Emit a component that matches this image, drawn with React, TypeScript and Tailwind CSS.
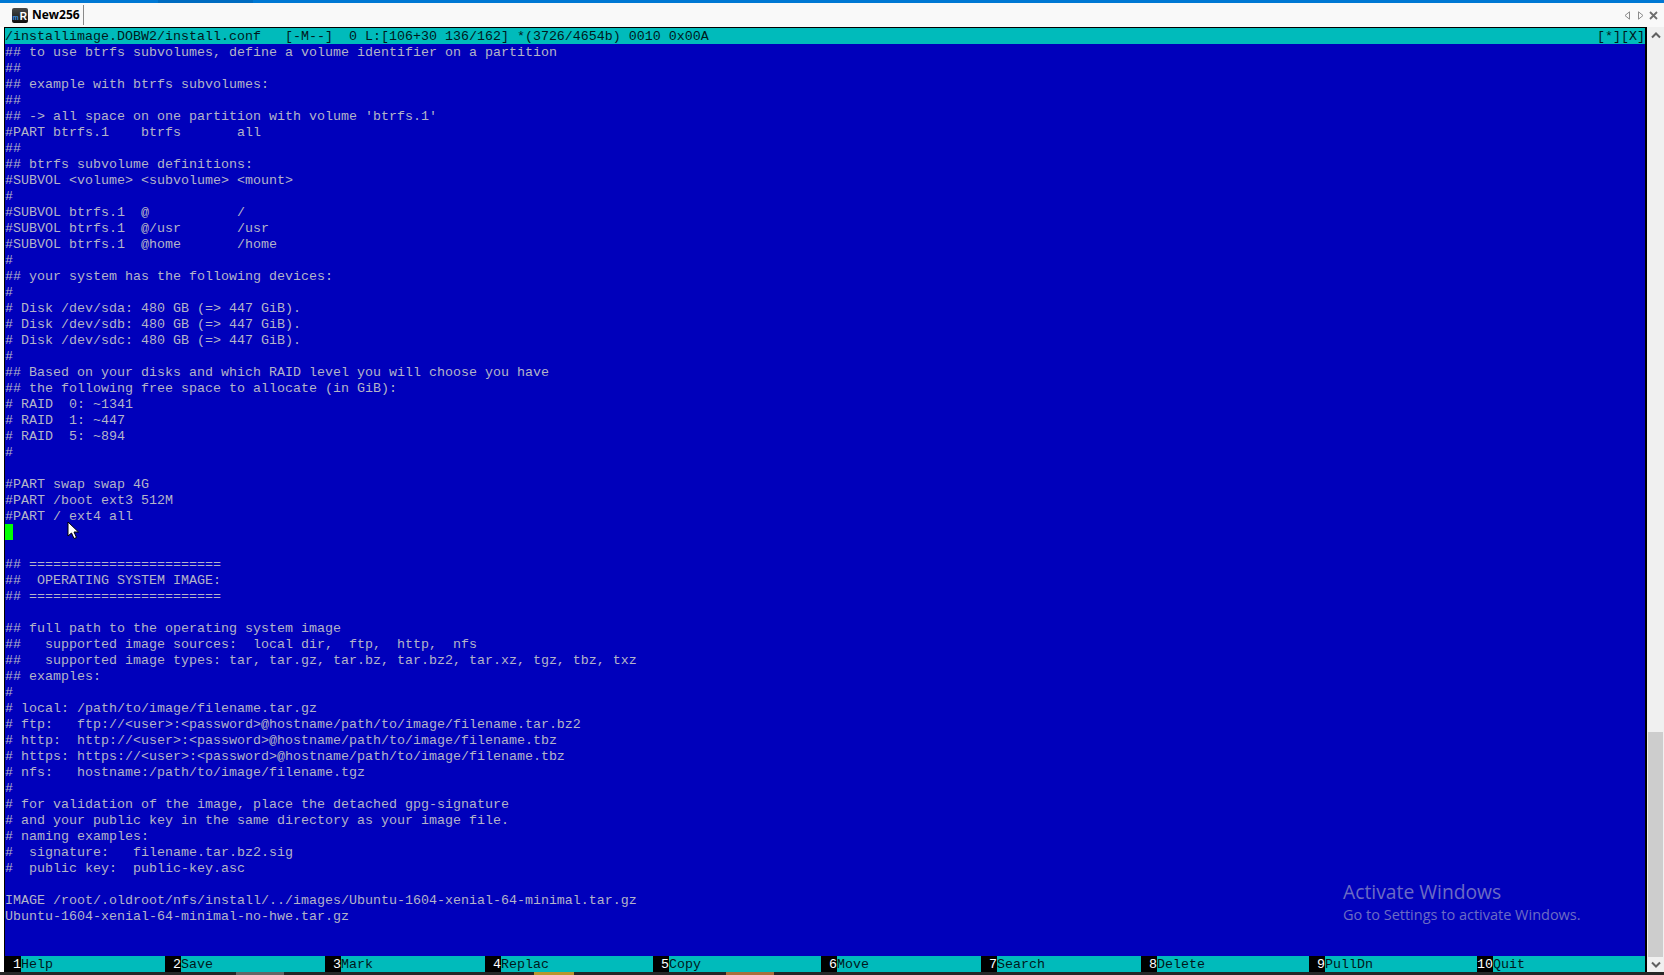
import { Fragment } from "react";

const lines = [
  "## to use btrfs subvolumes, define a volume identifier on a partition",
  "##",
  "## example with btrfs subvolumes:",
  "##",
  "## -> all space on one partition with volume 'btrfs.1'",
  "#PART btrfs.1    btrfs       all",
  "##",
  "## btrfs subvolume definitions:",
  "#SUBVOL <volume> <subvolume> <mount>",
  "#",
  "#SUBVOL btrfs.1  @           /",
  "#SUBVOL btrfs.1  @/usr       /usr",
  "#SUBVOL btrfs.1  @home       /home",
  "#",
  "## your system has the following devices:",
  "#",
  "# Disk /dev/sda: 480 GB (=> 447 GiB).",
  "# Disk /dev/sdb: 480 GB (=> 447 GiB).",
  "# Disk /dev/sdc: 480 GB (=> 447 GiB).",
  "#",
  "## Based on your disks and which RAID level you will choose you have",
  "## the following free space to allocate (in GiB):",
  "# RAID  0: ~1341",
  "# RAID  1: ~447",
  "# RAID  5: ~894",
  "#",
  "",
  "#PART swap swap 4G",
  "#PART /boot ext3 512M",
  "#PART / ext4 all",
  "CURSOR",
  "",
  "## ========================",
  "##  OPERATING SYSTEM IMAGE:",
  "## ========================",
  "",
  "## full path to the operating system image",
  "##   supported image sources:  local dir,  ftp,  http,  nfs",
  "##   supported image types: tar, tar.gz, tar.bz, tar.bz2, tar.xz, tgz, tbz, txz",
  "## examples:",
  "#",
  "# local: /path/to/image/filename.tar.gz",
  "# ftp:   ftp://<user>:<password>@hostname/path/to/image/filename.tar.bz2",
  "# http:  http://<user>:<password>@hostname/path/to/image/filename.tbz",
  "# https: https://<user>:<password>@hostname/path/to/image/filename.tbz",
  "# nfs:   hostname:/path/to/image/filename.tgz",
  "#",
  "# for validation of the image, place the detached gpg-signature",
  "# and your public key in the same directory as your image file.",
  "# naming examples:",
  "#  signature:   filename.tar.bz2.sig",
  "#  public key:  public-key.asc",
  "",
  "IMAGE /root/.oldroot/nfs/install/../images/Ubuntu-1604-xenial-64-minimal.tar.gz",
  "Ubuntu-1604-xenial-64-minimal-no-hwe.tar.gz",
  "",
  "",
];

const fnKeys = [
  { n: "1", label: "Help", width: "w-[144px]" },
  { n: "2", label: "Save", width: "w-[144px]" },
  { n: "3", label: "Mark", width: "w-[144px]" },
  { n: "4", label: "Replac", width: "w-[152px]" },
  { n: "5", label: "Copy", width: "w-[152px]" },
  { n: "6", label: "Move", width: "w-[144px]" },
  { n: "7", label: "Search", width: "w-[144px]" },
  { n: "8", label: "Delete", width: "w-[152px]" },
  { n: "9", label: "PullDn", width: "w-[152px]" },
  { n: "10", label: "Quit", width: "w-[152px]" },
];

function TabBar() {
  return (
    <div className="flex h-6 items-center bg-[#f9f9f9] pl-3">
      {/* app logo */}
      <div className="flex h-[15px] w-4 items-end justify-end overflow-hidden rounded-[2px] bg-gradient-to-b from-[#4a4a4a] to-[#111111] pr-[1px] font-['Liberation_Sans',sans-serif] text-[10px] font-bold leading-[13px] text-white">
        <span className="mr-[1px] text-[7px] leading-[10px] text-[#3b8fe0]">m</span>
        R
      </div>
      <span className="ml-1 font-['Open_Sans',sans-serif] text-xs font-bold leading-6 text-black">
        New256
      </span>
      <div className="ml-[3px] h-5 w-px bg-[#8a8a8a]" />
      <div className="flex-1" />
      <div className="mr-[6px] flex items-center gap-[5px]">
        <svg width="7" height="9" viewBox="0 0 7 9" className="text-[#8c8c8c]">
          <path d="M5.5 0.8 L1 4.5 L5.5 8.2 Z" fill="none" stroke="currentColor" />
        </svg>
        <svg width="7" height="9" viewBox="0 0 7 9" className="ml-px text-[#8c8c8c]">
          <path d="M1.5 0.8 L6 4.5 L1.5 8.2 Z" fill="none" stroke="currentColor" />
        </svg>
        <svg width="9" height="9" viewBox="0 0 9 9" className="text-[#6e6e6e]">
          <path d="M1 1 L8 8 M8 1 L1 8" fill="none" stroke="currentColor" strokeWidth="1.8" />
        </svg>
      </div>
    </div>
  );
}

function Editor() {
  return (
    <div className="h-[945px] w-[1643px] border-t border-r-2 border-l border-black bg-[#0000bb] font-['Liberation_Mono',monospace] text-[13.33px] leading-[18px] whitespace-pre text-[#b4b4c8]">
      <div className="flex h-4 justify-between bg-[#00bbbb] text-[#00181c]">
        <span>/installimage.DOBW2/install.conf   [-M--]  0 L:[106+30 136/162] *(3726/4654b) 0010 0x00A</span>
        <span>[*][X]</span>
      </div>
      {lines.map((line, i) =>
        line === "CURSOR" ? (
          <div key={i} className="h-4">
            <div className="h-4 w-2 bg-[#00ff00]" />
          </div>
        ) : (
          <div key={i} className="h-4">
            {line}
          </div>
        ),
      )}
      <div className="flex h-4 bg-black">
        {fnKeys.map((key) => (
          <Fragment key={key.n}>
            <div className="h-4 w-4 text-right text-white">{key.n}</div>
            <div className={`h-4 ${key.width} bg-[#00bbbb] text-[#00181c]`}>{key.label}</div>
          </Fragment>
        ))}
      </div>
    </div>
  );
}

function Scrollbar() {
  return (
    <div className="flex h-[945px] w-[17px] flex-col items-center bg-[#f0f0f0]">
      <div className="flex h-[705px] w-full items-start justify-center pt-[5px]">
        <svg width="10" height="7" viewBox="0 0 10 7" className="text-[#606060]">
          <path d="M1 5.5 L5 1.5 L9 5.5" fill="none" stroke="currentColor" strokeWidth="2" />
        </svg>
      </div>
      <div className="h-[225px] w-[15px] bg-[#cdcdcd]" />
      <div className="flex flex-1 items-center justify-center">
        <svg width="10" height="7" viewBox="0 0 10 7" className="text-[#606060]">
          <path d="M1 1.5 L5 5.5 L9 1.5" fill="none" stroke="currentColor" strokeWidth="2" />
        </svg>
      </div>
    </div>
  );
}

export default function App() {
  return (
    <div className="relative flex h-[975px] w-[1664px] flex-col overflow-hidden bg-white">
      <div className="flex h-[3px] bg-[#0078d4]">
        <div className="ml-[158px] h-[3px] w-[95px] bg-[#006cc1]" />
      </div>
      <TabBar />
      <div className="flex pl-1">
        <Editor />
        <Scrollbar />
      </div>
      {/* taskbar edge at the bottom of the capture */}
      <div className="flex h-[3px] bg-[#262626]">
        <div className="ml-[236px] w-12 bg-[#666666]" />
        <div className="ml-[250px] w-10 bg-[#b8962e]" />
        <div className="ml-[152px] w-12 bg-[#a8703c]" />
      </div>

      {/* mouse pointer */}
      <svg width="13" height="19" viewBox="0 0 13 19" className="absolute top-[521px] left-[67px]">
        <path
          d="M1 1 L1 15 L4.5 12 L7 17.5 L9.5 16.5 L7 11 L11.5 11 Z"
          fill="#ffffff"
          stroke="#000000"
          strokeWidth="1"
        />
      </svg>

      {/* windows activation watermark */}
      <div className="pointer-events-none absolute top-[879px] left-[1343px] font-['Open_Sans',sans-serif] text-[#6c6cc4]">
        <div className="text-[19.3px] leading-[26px]">Activate Windows</div>
        <div className="text-[14.5px] leading-5">Go to Settings to activate Windows.</div>
      </div>
    </div>
  );
}
